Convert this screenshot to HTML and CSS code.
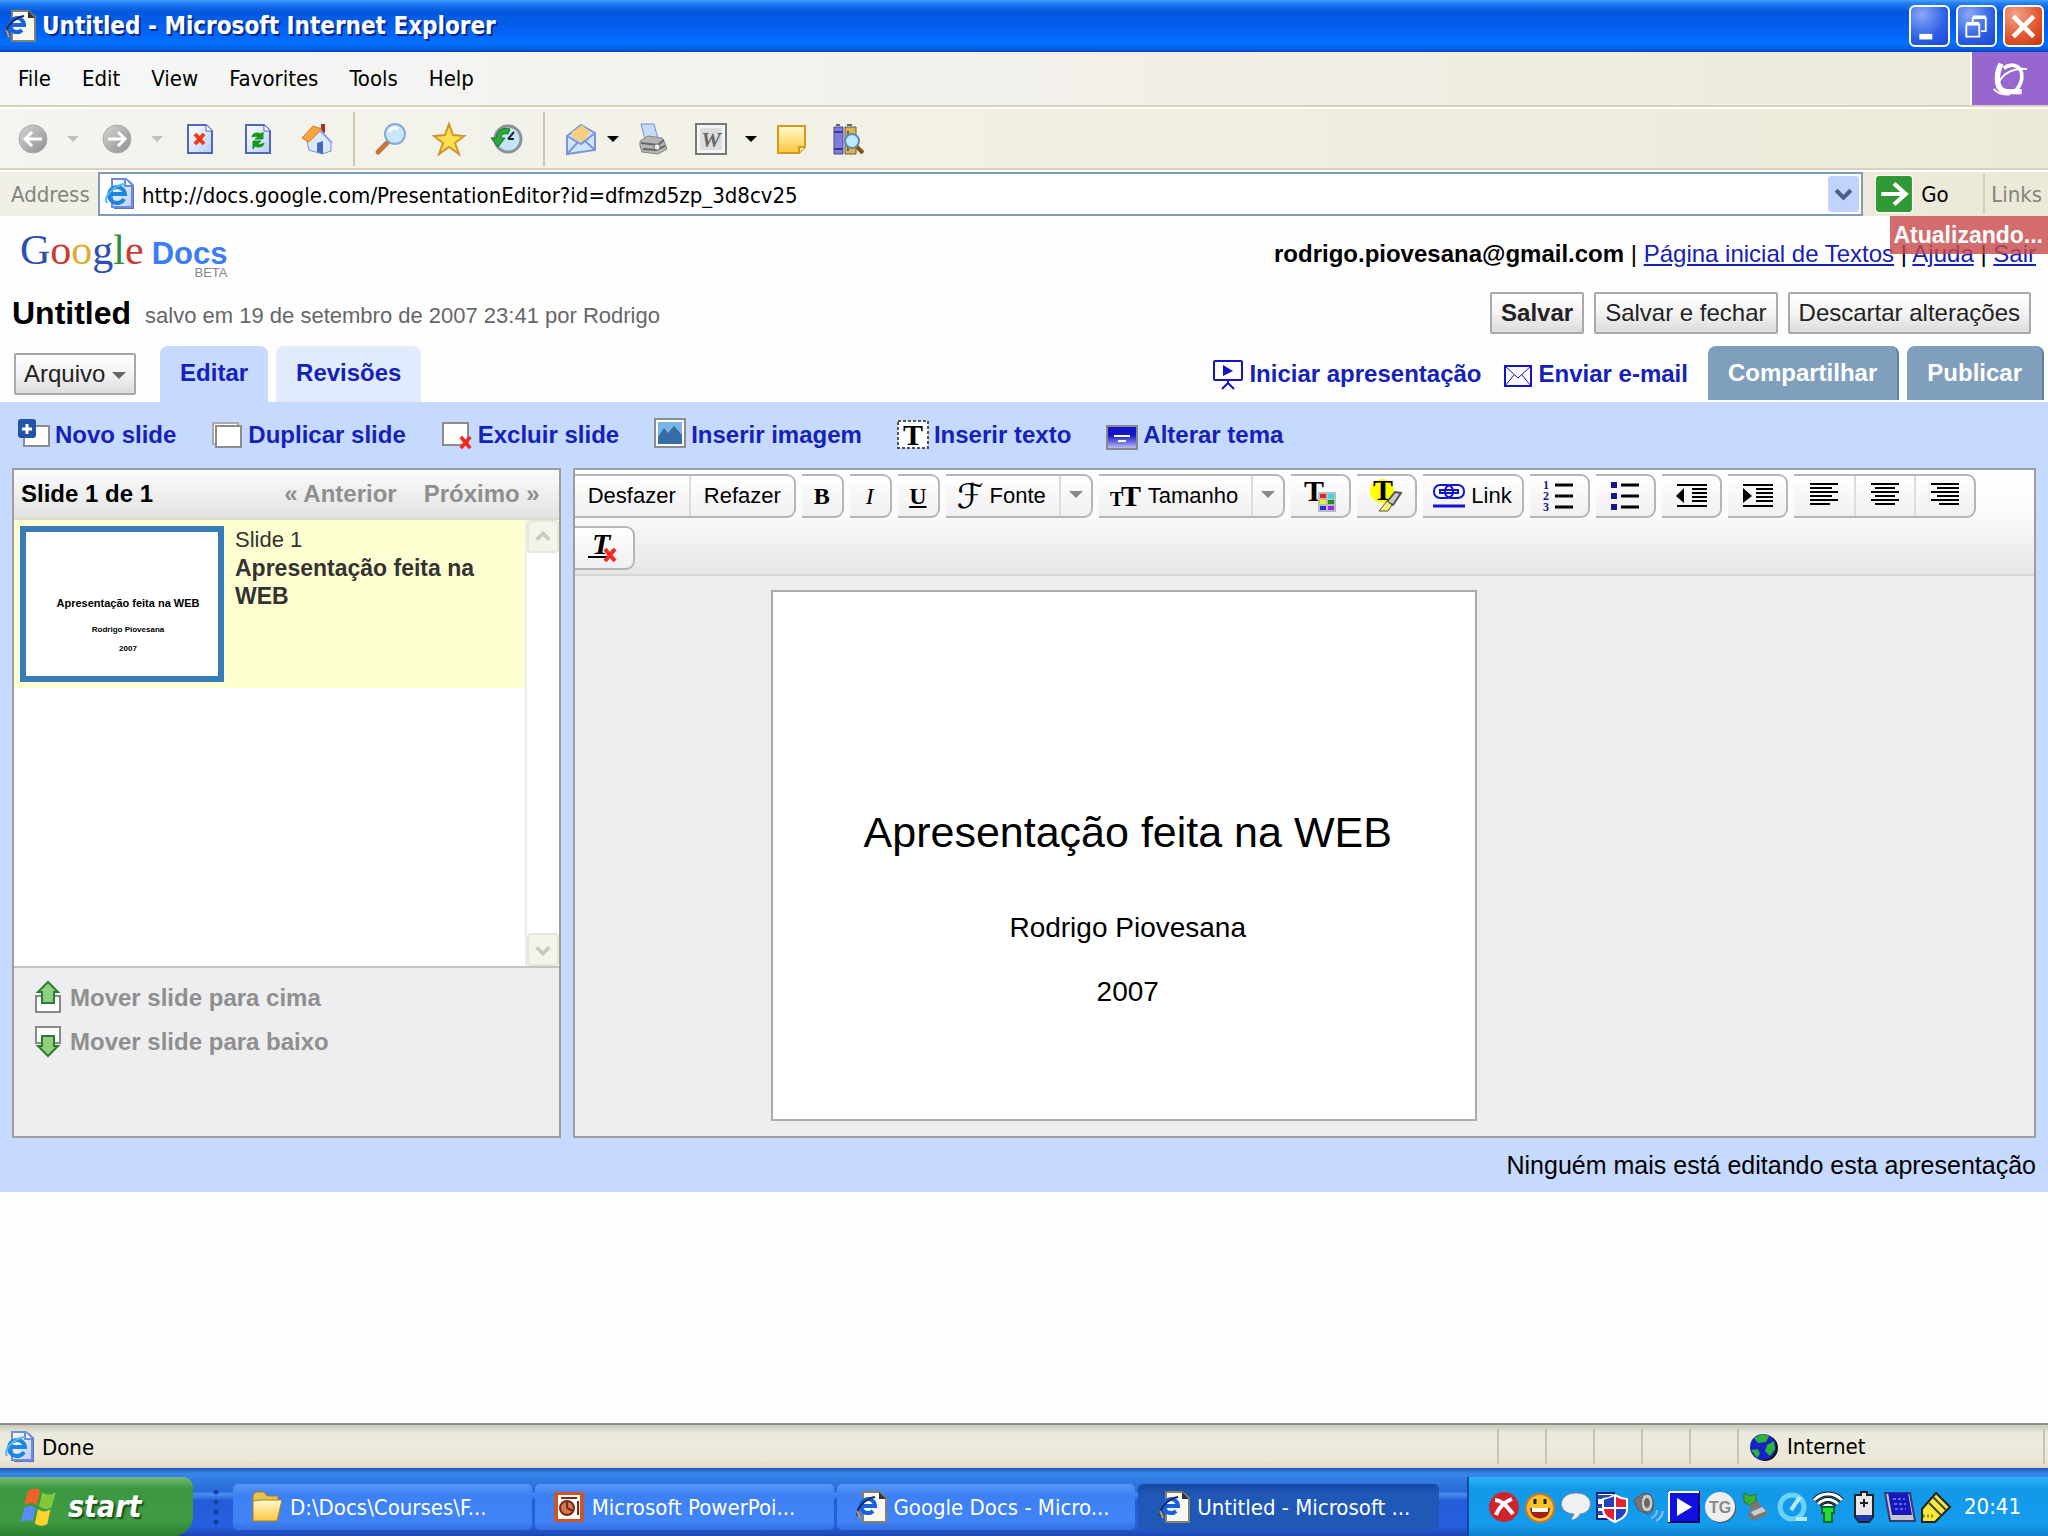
FILE: index.html
```html
<!DOCTYPE html>
<html lang="pt-BR">
<head>
    <meta charset="UTF-8">
    <meta name="viewport" content="width=device-width, initial-scale=1.0">
    <title>Untitled</title>
    <link rel="stylesheet" href="styles.css">
</head>
<body>
    <!-- Shared icons -->
    <svg class="defs" width="0" height="0" aria-hidden="true">
        <defs>
            <linearGradient id="page-fill" x1="0" y1="0" x2="1" y2="1">
                <stop offset="0" stop-color="#ffffff"/>
                <stop offset="1" stop-color="#b9cdf8"/>
            </linearGradient>
            <linearGradient id="gold" x1="0" y1="0" x2="0" y2="1">
                <stop offset="0" stop-color="#fffbd0"/>
                <stop offset="1" stop-color="#fcc63c"/>
            </linearGradient>
            <linearGradient id="grey" x1="0" y1="0" x2="1" y2="1">
                <stop offset="0" stop-color="#d4d4d4"/>
                <stop offset="1" stop-color="#8f8f8f"/>
            </linearGradient>
            <linearGradient id="navy" x1="0" y1="0" x2="0" y2="1">
                <stop offset="0.4" stop-color="#1414c8"/>
                <stop offset="1" stop-color="#c8ccf4"/>
            </linearGradient>
        </defs>
        <symbol id="ie-blue" viewBox="0 0 32 32">
            <path d="M10 2h15l5 5v24H10z" fill="#5f74b4"/>
            <path d="M8 1h14l6 6v22H8z" fill="url(#page-fill)" stroke="#6c8ce0" stroke-width="2"/>
            <path d="M21 1v7h7" fill="#fff" stroke="#6c8ce0" stroke-width="2"/>
            <path d="M20 21a8 8 0 1 1 1-5H7" fill="none" stroke="#1d86dc" stroke-width="4"/>
            <path d="M3 25C-1 19 10 7 21 6" fill="none" stroke="#59b9f0" stroke-width="2"/>
        </symbol>
        <symbol id="ie-white" viewBox="0 0 32 32">
            <path d="M8 1h16l7 6v24H8z" fill="#f7f7f2" stroke="#85806c" stroke-width="2"/>
            <path d="M24 1v7h7z" fill="#333"/>
            <path d="M18 20a7 7 0 1 1 2-5H7" fill="none" stroke="#1762dc" stroke-width="4"/>
            <path d="M3 25C0 20 8 8 20 6" fill="none" stroke="#112a66" stroke-width="2"/>
            <path d="M2 20l3 7" stroke="#c19854" stroke-width="2"/>
        </symbol>
        <symbol id="red-x" viewBox="0 0 16 16">
            <path d="M3 2l10 12M13 2L3 14" stroke="#f52a1f" stroke-width="4"/>
        </symbol>
    </svg>

    <header class="titlebar">
        <svg class="icon"><use href="#ie-white"/></svg>
        <h1 class="window-title">Untitled - Microsoft Internet Explorer</h1>
        <button class="win-btn" aria-label="Minimize">
            <svg viewBox="0 0 40 40"><path d="M9 31h14" stroke="#fff" stroke-width="6"/></svg>
        </button>
        <button class="win-btn" aria-label="Restore">
            <svg viewBox="0 0 40 40" fill="none" stroke="#fff" stroke-width="2"><path d="M9 18h14v13H9zM9 16h14M16 16v-5h14v14h-5M16 9h14"/></svg>
        </button>
        <button class="win-btn close" aria-label="Close">
            <svg viewBox="0 0 40 40"><path d="M9 9l22 22M31 9L9 31" stroke="#fff" stroke-width="5"/></svg>
        </button>
    </header>

    <div class="menubar">
        <nav class="menus">
            <button>File</button>
            <button>Edit</button>
            <button>View</button>
            <button>Favorites</button>
            <button>Tools</button>
            <button>Help</button>
        </nav>
        <div class="throbber">
            <svg viewBox="0 0 40 40" fill="none" stroke="#fff">
                <path d="M10 3C3 18 5 34 17 34h16" stroke-width="6"/>
                <path d="M13 8c8-6 18-4 20 6 1 8-2 14-7 19" stroke-width="4"/>
                <path d="M8 23C13 13 25 7 39 9M2 31c4 5 10 7 18 6" stroke-width="2"/>
            </svg>
        </div>
    </div>

    <div class="ie-toolbar">
        <button class="tool" aria-label="Back"><svg class="icon" viewBox="0 0 32 32"><circle cx="16" cy="16" r="14" fill="url(#grey)" stroke="#aaa"/><path d="M25 16H8M15 9l-7 7 7 7" fill="none" stroke="#fff" stroke-width="3"/></svg></button>
        <button class="caret off" aria-label="Back history"></button>
        <button class="tool" aria-label="Forward"><svg class="icon" viewBox="0 0 32 32"><circle cx="16" cy="16" r="14" fill="url(#grey)" stroke="#aaa"/><path d="M7 16h17M17 9l7 7-7 7" fill="none" stroke="#fff" stroke-width="3"/></svg></button>
        <button class="caret off" aria-label="Forward history"></button>
        <button class="tool" aria-label="Stop"><svg class="icon" viewBox="0 0 32 32"><path d="M3 2h18l6 6v22H3z" fill="url(#page-fill)" stroke="#4d68b8" stroke-width="2"/><path d="M21 2v6h6" fill="#fff" stroke="#4d68b8"/><path d="M10 11l9 10M19 11l-9 10" stroke="#f03c14" stroke-width="4"/></svg></button>
        <button class="tool" aria-label="Refresh"><svg class="icon" viewBox="0 0 32 32"><path d="M3 2h18l6 6v22H3z" fill="url(#page-fill)" stroke="#4d68b8" stroke-width="2"/><path d="M21 2v6h6" fill="#fff" stroke="#4d68b8"/><path d="M9 14c0-4 6-5 9-3l2-2v7h-8l3-2c-2-1-4-1-6 0zM21 20c0 4-6 5-9 3l-2 3v-8h8l-3 3c2 1 4 0 6-1z" fill="#109a18" stroke="#109a18"/></svg></button>
        <button class="tool" aria-label="Home"><svg class="icon" viewBox="0 0 32 32"><path d="M6 18l13-11 11 12v9l-9 3-13-4z" fill="#dbe9fb" stroke="#7593c4"/><path d="M20 1h4v9h-4z" fill="#b4281e"/><path d="M1 15L12 3l9 3L8 19z" fill="#f6a344" stroke="#d07a24"/><path d="M19 7l12 13" stroke="#8ba6d4" stroke-width="2"/><path d="M16 20l6-2v13l-6-2z" fill="#426bc0"/></svg></button>
        <span class="tool-sep"></span>
        <button class="tool" aria-label="Search"><svg class="icon" viewBox="0 0 32 32"><path d="M14 18L3 29" stroke="#c6753a" stroke-width="5" stroke-linecap="round"/><circle cx="20" cy="11" r="10" fill="#cbe7fc" stroke="#85a9e0" stroke-width="2"/><path d="M14 9c1-4 6-5 9-3" stroke="#fff" stroke-width="3" fill="none"/></svg></button>
        <button class="tool" aria-label="Favorites"><svg class="icon" viewBox="0 0 32 32"><path d="M16 1l4 11 11 1-9 7 4 11-10-7-10 7 4-11-9-7 11-1z" fill="#ffe04c" stroke="#cf952a" stroke-width="2"/></svg></button>
        <button class="tool" aria-label="History"><svg class="icon" viewBox="0 0 32 32"><circle cx="17" cy="16" r="13" fill="#c3e6f5" stroke="#8b9199" stroke-width="3"/><path d="M17 16l6-7M17 16h6" stroke="#223" stroke-width="2"/><path d="M0 15h5C6 7 12 4 19 6l-2 5c-5-1-7 1-7 4h4l-7 9z" fill="#30a53c" stroke="#157a20"/></svg></button>
        <span class="tool-sep"></span>
        <button class="tool" aria-label="Mail"><svg class="icon" viewBox="0 0 32 32"><path d="M2 13L16 2l14 8v17L2 31z" fill="#d0e4fc" stroke="#7a96d6" stroke-width="2"/><path d="M7 9l10-7 9 8-8 9-11-4z" fill="#f8cf82"/><path d="M2 13l14 8 14-11M2 31l11-12M30 27l-10-9" fill="none" stroke="#7a96d6" stroke-width="2"/></svg></button>
        <button class="caret tight" aria-label="Mail options"></button>
        <button class="tool" aria-label="Print"><svg class="icon" viewBox="0 0 32 32"><path d="M4 1h13l4 15H8z" fill="#c6dcfb" stroke="#6a92e0"/><path d="M3 18l8-5 14 2 3 5 2 6-9 5-16-2-2-6z" fill="#b5b5b5" stroke="#858585"/><path d="M4 20l17 2 6-5M6 26l13 1 9-4" stroke="#666" fill="none" stroke-width="2"/><circle cx="20" cy="24" r="3" fill="#eee" stroke="#777"/></svg></button>
        <button class="tool" aria-label="Edit with Word"><svg class="icon" viewBox="0 0 32 32"><path d="M1 1h30v30H1z" fill="#f4f4f4" stroke="#777" stroke-width="2"/><path d="M5 5h22v22H5z" fill="#ddd"/><text x="16" y="24" text-anchor="middle" class="glyph word">W</text></svg></button>
        <button class="caret" aria-label="Edit options"></button>
        <button class="tool" aria-label="Discuss"><svg class="icon" viewBox="0 0 32 32"><path d="M3 3h27v21l-6 6H3z" fill="url(#gold)" stroke="#d39a1e" stroke-width="2"/><path d="M30 24h-6v6" fill="#fff3b0" stroke="#d39a1e" stroke-width="2"/></svg></button>
        <button class="tool" aria-label="Research"><svg class="icon" viewBox="0 0 32 32"><path d="M1 4h9v27H1z" fill="#7f7cdc" stroke="#4a489c"/><path d="M1 9h9M1 26h9" stroke="#3b3988" stroke-width="2"/><path d="M12 4h11v27H12z" fill="#dfb341" stroke="#55606e"/><path d="M3 2h4M14 2h5M15 8v20" stroke="#666" stroke-width="2"/><circle cx="19" cy="18" r="7" fill="#bdeafa" stroke="#5f86b5" stroke-width="2"/><path d="M24 24l6 6" stroke="#8a5416" stroke-width="4"/></svg></button>
    </div>

    <form class="addressbar">
        <label for="address">Address</label>
        <div class="address-box">
            <svg class="icon"><use href="#ie-blue"/></svg>
            <input id="address" type="text" value="http://docs.google.com/PresentationEditor?id=dfmzd5zp_3d8cv25">
            <button type="button" class="address-drop" aria-label="Show addresses"><svg viewBox="0 0 20 20"><path d="M3 6l7 7 7-7" fill="none" stroke="#4a6185" stroke-width="4"/></svg></button>
        </div>
        <button type="button" class="go-btn">
            <svg viewBox="0 0 36 36"><rect width="36" height="36" rx="3" fill="#fff"/><rect x="1" y="1" width="34" height="34" rx="3" fill="#2f9a35"/><path d="M6 18h22M18 8l11 10-11 10" fill="none" stroke="#fff" stroke-width="4"/></svg>
            Go
        </button>
        <button type="button" class="links-btn">Links</button>
    </form>

    <main class="page">
        <div class="updating">Atualizando...</div>

        <div class="account-row">
            <div class="logo">
                <span class="logo-google"><span class="b">G</span><span class="r">o</span><span class="y">o</span><span class="b">g</span><span class="g">l</span><span class="r">e</span></span>
                <span class="logo-docs">Docs<small>BETA</small></span>
            </div>
            <div class="account">
                <strong>rodrigo.piovesana@gmail.com</strong> | <a href="#">Página inicial de Textos</a> | <a href="#">Ajuda</a> | <a href="#">Sair</a>
            </div>
        </div>

        <div class="doc-row">
            <h2>Untitled</h2>
            <span class="saved">salvo em 19 de setembro de 2007 23:41 por Rodrigo</span>
            <div class="save-buttons">
                <button class="btn"><b>Salvar</b></button>
                <button class="btn">Salvar e fechar</button>
                <button class="btn">Descartar alterações</button>
            </div>
        </div>

        <div class="tab-row">
            <button class="btn file-btn">Arquivo <span class="down"></span></button>
            <a href="#" class="tab active">Editar</a>
            <a href="#" class="tab">Revisões</a>
            <div class="share">
                <a href="#" class="share-link"><svg class="icon" viewBox="0 0 32 32" fill="none" stroke="#1414c4" stroke-width="2"><rect x="2" y="3" width="28" height="19" rx="1"/><path d="M16 22v3l-6 6M16 25l6 6"/><path d="M11 7l10 6-10 5z" fill="#1414c4" stroke="none"/></svg>Iniciar apresentação</a>
                <a href="#" class="share-link"><svg class="icon" viewBox="0 0 32 32" fill="none" stroke="#1414c4" stroke-width="2"><rect x="3" y="8" width="26" height="20"/><path d="M3 8l13 12L29 8M3 28l9-11M29 28l-9-11" stroke-width="1"/></svg>Enviar e-mail</a>
                <a href="#" class="share-tab">Compartilhar</a>
                <a href="#" class="share-tab">Publicar</a>
            </div>
        </div>

        <div class="editor">
            <div class="actions">
                <a href="#"><svg class="icon" viewBox="0 0 32 32"><path d="M6 7h25v20H6z" fill="#fff" stroke="#8c8c8c" stroke-width="2"/><rect y="0" width="18" height="19" rx="3" fill="#2353a8"/><path d="M9 5v10M4 10h10" stroke="#fff" stroke-width="3"/></svg>Novo slide</a>
                <a href="#"><svg class="icon" viewBox="0 0 32 32"><path d="M2 4h25v21H2z" fill="#fff" stroke="#aaa" stroke-width="2"/><path d="M5 7h25v21H5z" fill="#fff" stroke="#8c8c8c" stroke-width="2"/></svg>Duplicar slide</a>
                <a href="#"><svg class="icon" viewBox="0 0 32 32"><path d="M2 4h25v22H2z" fill="#fff" stroke="#8c8c8c" stroke-width="2"/><use href="#red-x" x="17" y="15" width="15" height="17"/></svg>Excluir slide</a>
                <a href="#"><svg class="icon" viewBox="0 0 32 32"><path d="M1 0h30v28H1z" fill="#fff" stroke="#8c8c8c" stroke-width="2"/><path d="M4 3h24v22H4z" fill="#79b5e4"/><path d="M4 18l6-9 4 5 6-7 8 9v9H4z" fill="#376da4"/></svg>Inserir imagem</a>
                <a href="#"><svg class="icon" viewBox="0 0 32 32"><path d="M1 2h30v27H1z" fill="#fff" stroke="#555" stroke-width="2" stroke-dasharray="3 2"/><text x="16" y="26" text-anchor="middle" class="glyph big">T</text></svg>Inserir texto</a>
                <a href="#"><svg class="icon" viewBox="0 0 32 32"><path d="M1 7h30v23H1z" fill="url(#navy)" stroke="#888" stroke-width="2"/><path d="M8 17h16M12 22h8" stroke="#fff" stroke-width="2"/></svg>Alterar tema</a>
            </div>

            <div class="panels">
                <section class="slides-panel">
                    <div class="slides-head">
                        <strong>Slide 1 de 1</strong>
                        <button disabled>« Anterior</button>
                        <button disabled>Próximo »</button>
                    </div>
                    <div class="slides-list">
                        <div class="slides-scroll">
                            <div class="slide-item">
                                <div class="thumb">
                                    <p class="thumb-title">Apresentação feita na WEB</p>
                                    <p>Rodrigo Piovesana</p>
                                    <p>2007</p>
                                </div>
                                <div class="slide-label">Slide 1<b>Apresentação feita na WEB</b></div>
                            </div>
                        </div>
                        <div class="scrollbar">
                            <button disabled aria-label="Scroll up"><svg viewBox="0 0 20 20"><path d="M3 13l7-7 7 7" fill="none" stroke="#cac8bd" stroke-width="4"/></svg></button>
                            <button disabled aria-label="Scroll down"><svg viewBox="0 0 20 20"><path d="M3 7l7 7 7-7" fill="none" stroke="#cac8bd" stroke-width="4"/></svg></button>
                        </div>
                    </div>
                    <div class="slides-foot">
                        <button disabled><svg class="icon" viewBox="0 0 32 32"><path d="M4 14h24v16H4z" fill="#fff" stroke="#888" stroke-width="2"/><path d="M16 0l10 10h-4v11H10V10H6z" fill="#8fcf80" stroke="#2d7d32" stroke-width="2"/></svg>Mover slide para cima</button>
                        <button disabled><svg class="icon" viewBox="0 0 32 32"><path d="M4 1h24v16H4z" fill="#fff" stroke="#888" stroke-width="2"/><path d="M16 30L6 20h4V10h12v10h4z" fill="#8fcf80" stroke="#2d7d32" stroke-width="2"/></svg>Mover slide para baixo</button>
                    </div>
                </section>

                <section class="edit-panel">
                    <div class="format-bar">
                        <div class="group"><button>Desfazer</button><button>Refazer</button></div>
                        <div class="group small"><button class="serif"><b>B</b></button></div>
                        <div class="group small"><button class="serif"><i>I</i></button></div>
                        <div class="group small"><button class="serif"><b><u>U</u></b></button></div>
                        <div class="group"><button class="with-icon"><span class="script">ℱ</span>Fonte</button><button class="drop" aria-label="Fonte"><span class="down"></span></button></div>
                        <div class="group"><button class="with-icon"><svg class="icon" viewBox="0 0 32 32"><text x="0" y="26" class="glyph mid">T</text><text x="11" y="26" class="glyph big">T</text></svg>Tamanho</button><button class="drop" aria-label="Tamanho"><span class="down"></span></button></div>
                        <div class="group tile"><button aria-label="Cor do texto"><svg class="icon" viewBox="0 0 32 32"><text x="0" y="21" class="glyph big">T</text><path d="M14 12h18v20H14z" fill="#bbb"/><path d="M16 14h6v4h-6z" fill="#e62020"/><path d="M24 14h6v4h-6z" fill="#12e4f4"/><path d="M16 20h6v4h-6z" fill="#f5ee14"/><path d="M24 20h6v4h-6z" fill="#10902a"/><path d="M16 26h6v4h-6z" fill="#1c2ef4"/><path d="M24 26h6v4h-6z" fill="#9c28f4"/></svg></button></div>
                        <div class="group tile"><button aria-label="Cor de realce"><svg class="icon" viewBox="0 0 32 32"><circle cx="12" cy="11" r="12" fill="#ffff00"/><text x="3" y="20" class="glyph big">T</text><path d="M31 13l-8 12-6-3 8-10z" fill="#ccc" stroke="#555" stroke-width="2"/><path d="M17 21l5 4-4 6H9z" fill="#f8f070" stroke="#554"/></svg></button></div>
                        <div class="group"><button class="with-icon link"><svg class="icon" viewBox="0 0 32 32" fill="none" stroke="#1414cc" stroke-width="2"><rect x="1" y="5" width="19" height="13" rx="6"/><rect x="12" y="5" width="19" height="13" rx="6"/><path d="M7 10h18v3H7z"/><path d="M0 26h32" stroke-width="3"/></svg>Link</button></div>
                        <div class="group tile"><button aria-label="Lista numerada"><svg class="icon" viewBox="0 0 32 32"><text x="0" y="9" class="glyph num">1</text><text x="0" y="20" class="glyph num">2</text><text x="0" y="31" class="glyph num">3</text><path d="M12 5h18M12 16h18M12 27h18" stroke="#000" stroke-width="3"/></svg></button></div>
                        <div class="group tile"><button aria-label="Lista com marcadores"><svg class="icon" viewBox="0 0 32 32"><path d="M2 2h6v6H2zM2 13h6v6H2zM2 24h6v6H2z" fill="#15158c"/><path d="M12 5h18M12 16h18M12 27h18" stroke="#000" stroke-width="3"/></svg></button></div>
                        <div class="group tile"><button aria-label="Diminuir recuo"><svg class="icon" viewBox="0 0 32 32"><path d="M2 5h30M17 9h15M17 13h15M17 17h15M17 21h15M2 26h30" stroke="#000" stroke-width="2"/><path d="M9 8v15L1 16z"/></svg></button></div>
                        <div class="group tile"><button aria-label="Aumentar recuo"><svg class="icon" viewBox="0 0 32 32"><path d="M2 5h30M15 9h17M15 13h17M15 17h17M15 21h17M2 26h30" stroke="#000" stroke-width="2"/><path d="M2 8v15l9-7z"/></svg></button></div>
                        <div class="group tile align"><button aria-label="Alinhar à esquerda"><svg class="icon" viewBox="0 0 32 32"><path d="M2 4h28M2 8h22M2 12h28M2 16h22M2 20h28M2 24h20" stroke="#000" stroke-width="2"/></svg></button><button aria-label="Centralizar"><svg class="icon" viewBox="0 0 32 32"><path d="M2 4h28M6 8h20M2 12h28M6 16h20M2 20h28M6 24h20" stroke="#000" stroke-width="2"/></svg></button><button aria-label="Alinhar à direita"><svg class="icon" viewBox="0 0 32 32"><path d="M2 4h28M8 8h22M2 12h28M8 16h22M2 20h28M10 24h20" stroke="#000" stroke-width="2"/></svg></button></div>
                        <div class="group tile"><button aria-label="Remover formatação"><svg class="icon" viewBox="0 0 32 32"><text x="4" y="22" class="glyph big slant">T</text><path d="M0 25h20" stroke="#000" stroke-width="2"/><use href="#red-x" x="14" y="15" width="16" height="16"/></svg></button></div>
                    </div>
                    <div class="canvas">
                        <div class="slide">
                            <h3>Apresentação feita na WEB</h3>
                            <p>Rodrigo Piovesana</p>
                            <p>2007</p>
                        </div>
                    </div>
                </section>
            </div>

            <p class="presence">Ninguém mais está editando esta apresentação</p>
        </div>
    </main>

    <footer class="statusbar">
        <svg class="icon"><use href="#ie-blue"/></svg>
        <span class="status-text">Done</span>
        <span class="cell"></span><span class="cell"></span><span class="cell"></span><span class="cell"></span><span class="cell"></span>
        <span class="cell zone"><svg class="icon" viewBox="0 0 32 32"><circle cx="18" cy="17" r="13" fill="#111"/><circle cx="16" cy="16" r="13" fill="#1722c4"/><path d="M7 7l8-4 7 2-3 6-8 1zM20 14l7-4 1 8-5 7-5-5zM4 19l7-1 2 5-3 4z" fill="#2cb43a"/></svg>Internet</span>
    </footer>

    <div class="taskbar">
        <button class="start">
            <svg viewBox="0 0 36 40"><path d="M7 6c4-5 9-4 12-2l-3 14c-4-3-8-2-12 0z" fill="#f0622a"/><path d="M21 6c4 3 8 3 13 0l-4 14c-4 3-8 2-12-1z" fill="#7fc93a"/><path d="M4 21c4-3 8-2 11 0l-3 13c-4-2-8-2-12 1z" fill="#5b8af4"/><path d="M17 22c4 3 8 3 12 0l-3 14c-4 3-8 2-12 0z" fill="#fbd22e"/></svg>
            start
        </button>
        <span class="grip"></span>
        <div class="tasks">
            <button class="task"><svg class="icon" viewBox="0 0 32 32"><path d="M2 4l3-3h8l3 4h11v6H2z" fill="#e8c34e" stroke="#a87f1c"/><path d="M2 10v20h24l5-21H9z" fill="url(#gold)" stroke="#a87f1c"/></svg>D:\Docs\Courses\F...</button>
            <button class="task"><svg class="icon" viewBox="0 0 32 32"><path d="M1 1h30v30H1z" fill="#cc5425"/><path d="M5 4h22v24H5z" fill="#fff"/><circle cx="14" cy="17" r="7" fill="#d8754b" stroke="#762b12" stroke-width="2"/><path d="M14 17v-7M14 17l6 3M8 7h16M25 10v14" stroke="#762b12" stroke-width="2"/></svg>Microsoft PowerPoi...</button>
            <button class="task"><svg class="icon"><use href="#ie-white"/></svg>Google Docs - Micro...</button>
            <button class="task current"><svg class="icon"><use href="#ie-white"/></svg>Untitled - Microsoft ...</button>
        </div>
        <div class="tray">
            <svg class="icon" viewBox="0 0 32 32"><circle cx="16" cy="16" r="15" fill="#cf2430"/><path d="M7 9c7 0 13 7 18 14M8 24c3-8 8-13 16-16" fill="none" stroke="#fff" stroke-width="4"/></svg>
            <svg class="icon" viewBox="0 0 32 32"><circle cx="16" cy="17" r="14" fill="#fcc42c" stroke="#d8771c" stroke-width="2"/><path d="M11 8v5M21 8v5" stroke="#222" stroke-width="3"/><path d="M6 17h20c0 14-20 14-20 0z" fill="#a3201a"/><path d="M8 17h16v4H8z" fill="#fff"/></svg>
            <svg class="icon" viewBox="0 0 32 32"><path d="M16 2c19 0 18 20 4 21-2 4-6 6-9 6l3-6C-4 22-2 2 16 2z" fill="#f0f0f0" stroke="#8b8b8b"/></svg>
            <svg class="icon" viewBox="0 0 32 32"><path d="M1 2h17v26H1z" fill="#fff" stroke="#12207a" stroke-width="2"/><path d="M1 6h16M1 15h16M1 22h16" stroke="#1b46b8" stroke-width="4"/><path d="M7 8l6-1 6-3 6 3 6 1v11c0 6-6 9-12 12C13 28 7 25 7 19z" fill="#e42230" stroke="#fff" stroke-width="2"/><path d="M8 9l11-4v12H8zM19 17h11c0 7-5 10-11 13z" fill="#2440c4"/><path d="M19 5v25M8 17h22" stroke="#fff" stroke-width="2"/></svg>
            <svg class="icon" viewBox="0 0 32 32"><path d="M2 9l8-6c12-5 16 16 6 20L6 19z" fill="#777" stroke="#555"/><ellipse cx="15" cy="12" rx="6" ry="9" fill="#ccc" stroke="#555"/><ellipse cx="15" cy="12" rx="3" ry="5" fill="#666"/><path d="M19 27c3 0 6-4 6-8M24 30c4-2 6-5 7-10" stroke="#98b8ff" stroke-width="2" fill="none"/></svg>
            <svg class="icon" viewBox="0 0 32 32"><path d="M1 1h30v30H1z" fill="#1010e0" stroke="#050560" stroke-width="2"/><path d="M1 1h30M1 1v30" stroke="#fff" stroke-width="2"/><path d="M9 7l15 9-15 9z" fill="#fff"/></svg>
            <svg class="icon" viewBox="0 0 32 32"><circle cx="17" cy="17" r="15" fill="#555"/><circle cx="16" cy="16" r="15" fill="#eee"/><text x="16" y="22" text-anchor="middle" class="glyph tg">TG</text></svg>
            <svg class="icon" viewBox="0 0 32 32"><path d="M4 2l6 3 6-2v7l-6 4-6-3z" fill="#3fae35" stroke="#1c7a1c"/><path d="M9 14l9-4 4 6 5 4v4l-14 6-6-6 4-3z" fill="#777"/><path d="M11 21l11-5 4 4-12 5z" fill="#ccc"/></svg>
            <svg class="icon" viewBox="0 0 32 32" fill="none" stroke="#6cd2f8"><circle cx="16" cy="16" r="12" stroke-width="5"/><path d="M15 19l9-13M20 28h11" stroke="#b4ecff" stroke-width="4"/></svg>
            <svg class="icon" viewBox="0 0 32 32"><path d="M2 9c8-8 20-8 28 0M6 13c6-6 14-6 20 0M10 17c4-4 8-4 12 0" fill="none" stroke="#111" stroke-width="5"/><path d="M2 9c8-8 20-8 28 0M6 13c6-6 14-6 20 0M10 17c4-4 8-4 12 0" fill="none" stroke="#fff" stroke-width="3"/><path d="M10 16h12v6h-2v9h-8v-9h-2z" fill="#1ce02c" stroke="#063" stroke-width="2"/></svg>
            <svg class="icon" viewBox="0 0 32 32"><path d="M13 1h6v3h6v22l-4 5H11l-4-5V4h6z" fill="#e8e8e8" stroke="#222" stroke-width="2"/><path d="M8 24h16v3l-3 3H11l-3-3z" fill="#2638a8"/><path d="M16 8v8M12 12h8" stroke="#222" stroke-width="2"/></svg>
            <svg class="icon" viewBox="0 0 32 32"><path d="M1 2h25l5 28H6z" fill="#c4c4d4" stroke="#333a78" stroke-width="2"/><path d="M4 2h20l4 22H8z" fill="#1518bc"/><path d="M9 8h12M10 13h12M11 18h11" stroke="#5f68e6" stroke-width="2" stroke-dasharray="3 2"/></svg>
            <svg class="icon" viewBox="0 0 32 32"><path d="M2 18L16 2l14 14-15 15H2z" fill="#f8e83a" stroke="#222" stroke-width="2"/><path d="M9 12l12 12M13 6l13 13" stroke="#444" stroke-width="2"/><path d="M3 25h12" stroke="#998a10" stroke-width="3" stroke-dasharray="2 2"/></svg>
            <time>20:41</time>
        </div>
    </div>
</body>
</html>
```

FILE: styles.css
```css
* {
    margin: 0;
    padding: 0;
    box-sizing: border-box;
}

body {
    font-family: "Liberation Sans", Arial, sans-serif;
    font-size: 24px;
    color: #000;
    background: #fefefe;
    min-height: 100vh;
    display: flex;
    flex-direction: column;
    white-space: nowrap;
}

button {
    font: inherit;
    color: inherit;
    background: none;
    border: none;
}

a {
    color: #1522b8;
}

svg {
    display: block;
    overflow: visible;
}

.defs {
    position: absolute;
}

.icon {
    width: 32px;
    height: 32px;
    flex: none;
}

.glyph {
    font-family: "Liberation Serif", serif;
    font-weight: bold;
}

.glyph.big {
    font-size: 30px;
}

.glyph.mid {
    font-size: 20px;
}

.glyph.slant {
    font-style: italic;
}

.glyph.num {
    font-size: 12px;
    fill: #15158c;
}

.glyph.word {
    font-size: 22px;
    font-style: italic;
    fill: #666;
}

.glyph.tg {
    font-family: "Liberation Sans", sans-serif;
    font-size: 16px;
    fill: #888;
}

/* Browser window */
.titlebar,
.menubar,
.addressbar,
.statusbar,
.taskbar {
    font-family: "DejaVu Sans Condensed", "DejaVu Sans", sans-serif;
    font-size: 22px;
}

.titlebar {
    height: 52px;
    display: flex;
    align-items: center;
    gap: 6px;
    padding: 0 4px;
    background: linear-gradient(#4a9ffb 0, #2380f4 6%, #0558dd 22%, #0462f4 60%, #0470ff 82%, #0560e8 94%, #0743c0 100%);
}

.window-title {
    flex: 1;
    font-size: 24px;
    font-weight: bold;
    color: #fff;
    text-shadow: 2px 2px #0a2a8c;
}

.win-btn {
    width: 41px;
    height: 42px;
    border: 2px solid #fff;
    border-radius: 6px;
    background: radial-gradient(circle at 30% 20%, #8aa8f8, #2c5ee6 60%, #1c48cc);
}

.win-btn.close {
    background: radial-gradient(circle at 30% 20%, #f4a58a, #e0532c 60%, #c03a10);
}

.menubar {
    height: 55px;
    display: flex;
    justify-content: space-between;
    background: linear-gradient(90deg, #f6f7f8, #f2f0ea 50%, #ede9d9);
    border-bottom: 2px solid #d8d2bd;
}

.menus {
    display: flex;
    align-items: center;
    padding-left: 8px;
}

.menus button {
    padding: 0 10px;
    margin-right: 11px;
}

.throbber {
    width: 78px;
    background: #9767cf;
    border-left: 2px solid #fff;
    display: flex;
    align-items: center;
    justify-content: center;
}

.throbber svg {
    width: 36px;
    height: 36px;
}

.ie-toolbar {
    height: 63px;
    display: flex;
    align-items: center;
    padding-left: 4px;
    background: linear-gradient(90deg, #f4f4f0, #f2f0e4 50%, #ece9d8);
    border-top: 2px solid #fff;
    border-bottom: 2px solid #d8d2bd;
}

.tool {
    width: 58px;
    display: flex;
    justify-content: center;
}

.caret {
    width: 22px;
    display: flex;
    justify-content: center;
}

.caret::before,
.down {
    content: "";
    display: inline-block;
    border: 6px solid transparent;
    border-top-color: #000;
    border-bottom: none;
}

.caret.off {
    margin-right: 4px;
}

.caret.off::before {
    border-top-color: #c0c0bc;
}

.caret.tight {
    margin-left: -8px;
}

.tool-sep {
    width: 2px;
    height: 54px;
    margin: 0 7px;
    background: #cdc8b2;
}

.addressbar {
    height: 46px;
    display: flex;
    align-items: center;
    background: linear-gradient(90deg, #f0f0e8, #ece9d8);
    border-top: 2px solid #fff;
}

.addressbar label {
    width: 98px;
    padding-left: 11px;
    color: #85857e;
}

.address-box {
    flex: 1;
    height: 44px;
    display: flex;
    align-items: center;
    gap: 6px;
    padding: 0 2px 0 4px;
    background: #fff;
    border: 2px solid #7f9db9;
}

.address-box input {
    flex: 1;
    min-width: 0;
    padding-top: 3px;
    font: inherit;
    border: none;
    outline: none;
}

.address-drop {
    width: 31px;
    height: 36px;
    padding: 5px;
    border-radius: 3px;
    background: #c2d3fb;
}

.go-btn {
    width: 110px;
    height: 40px;
    margin-left: 12px;
    display: flex;
    align-items: center;
    gap: 8px;
    border-right: 2px solid #d2cdb8;
}

.go-btn svg {
    width: 38px;
    height: 38px;
}

.links-btn {
    padding: 0 6px;
    color: #85857e;
}

/* Docs page */
.page {
    flex: 1;
    position: relative;
}

.updating {
    position: absolute;
    top: 0;
    right: 0;
    padding: 0 5px 0 4px;
    font-size: 23px;
    line-height: 38px;
    font-weight: bold;
    color: #fff;
    background: rgba(200, 72, 72, 0.8);
}

.account-row {
    height: 76px;
    display: flex;
    justify-content: space-between;
    align-items: center;
    padding: 0 12px 0 20px;
}

.logo {
    display: flex;
    align-items: baseline;
    gap: 8px;
    padding-bottom: 8px;
}

.logo-google {
    font-family: "Liberation Serif", serif;
    font-size: 42px;
    line-height: 48px;
}

.logo .b { color: #2a50b4; }
.logo .r { color: #c83c32; }
.logo .y { color: #e0ae28; }
.logo .g { color: #2f8c3e; }

.logo-docs {
    position: relative;
    font-size: 31px;
    font-weight: bold;
    color: #3c7cf4;
}

.logo-docs small {
    position: absolute;
    right: 0;
    bottom: -8px;
    font-size: 13px;
    font-weight: normal;
    color: #888;
}

.doc-row {
    height: 42px;
    display: flex;
    align-items: center;
    gap: 14px;
    padding: 0 17px 0 12px;
}

.doc-row h2 {
    font-size: 32px;
}

.saved {
    font-size: 22px;
    padding-top: 6px;
    color: #66666a;
}

.save-buttons {
    display: flex;
    gap: 10px;
    margin-left: auto;
}

.btn {
    height: 42px;
    padding: 0 9px;
    color: #222;
    border: 2px solid #aaa8aa;
    border-radius: 2px;
    background: linear-gradient(#fff, #f4f3f4 50%, #dddbdd);
}

.tab-row {
    display: flex;
    align-items: flex-end;
    margin-top: 12px;
    height: 56px;
    padding: 0 4px 0 14px;
}

.file-btn {
    align-self: center;
    padding: 0 8px;
    margin-right: 24px;
}

.down {
    border-width: 7px;
    border-bottom: none;
    border-top-color: #666;
    margin-bottom: 3px;
}

.tab,
.share-tab {
    height: 56px;
    line-height: 54px;
    padding: 0 20px;
    margin-right: 8px;
    font-weight: bold;
    text-decoration: none;
    border-radius: 8px 8px 0 0;
    background: #e1ebfe;
}

.tab.active {
    background: #c6d9ff;
}

.share {
    display: flex;
    gap: 8px;
    margin-left: auto;
}

.share-link {
    display: flex;
    align-items: center;
    gap: 5px;
    margin-right: 12px;
    font-weight: bold;
    text-decoration: none;
}

.share-tab {
    height: 54px;
    margin: 0 0 2px;
    color: #fff;
    background: #7f9fbd;
    border-right: 2px solid #5683a0;
}

.editor {
    background: #c6d9ff;
    padding: 0 12px;
}

.actions {
    height: 66px;
    display: flex;
    align-items: center;
    gap: 35px;
    padding-left: 6px;
}

.actions a {
    display: flex;
    align-items: center;
    gap: 5px;
    font-weight: bold;
    text-decoration: none;
}

.panels {
    display: grid;
    grid-template-columns: minmax(0, 3fr) minmax(0, 8fr);
    gap: 12px;
}

.slides-panel,
.edit-panel {
    border: 2px solid #9d9d9f;
    background: #eeedef;
}

.slides-panel button {
    font-weight: bold;
    color: #8f8f8f;
}

.slides-head {
    height: 50px;
    display: flex;
    align-items: center;
    gap: 27px;
    padding: 0 19px 0 7px;
    background: linear-gradient(#fbfbfb, #e2e2e3);
    border-bottom: 2px solid #dcdcd0;
}

.slides-head strong {
    margin-right: auto;
}

.slides-list {
    height: 448px;
    display: flex;
    background: #fff;
    border-bottom: 2px solid #c4c4bf;
}

.slides-scroll {
    flex: 1;
}

.slide-item {
    display: flex;
    gap: 11px;
    padding: 6px;
    background: #feffd0;
    white-space: normal;
}

.thumb {
    width: 204px;
    height: 156px;
    padding: 60px 0 0 12px;
    flex: none;
    background: #fff;
    border: 6px solid #377db9;
    text-align: center;
    font-size: 8px;
    line-height: 19px;
    font-weight: bold;
    white-space: nowrap;
}

.thumb-title {
    font-size: 11px;
    line-height: 22px;
    margin-bottom: 6px;
}

.slide-label {
    font-size: 22px;
    line-height: 28px;
    color: #333;
}

.slide-label b {
    display: block;
    font-size: 23px;
}

.scrollbar {
    width: 34px;
    display: flex;
    flex-direction: column;
    justify-content: space-between;
    border-left: 2px solid #edece8;
}

.scrollbar button {
    height: 33px;
    padding: 5px;
    border: 2px solid #e8e7dd;
    border-radius: 4px;
    background: #f5f4ec;
}

.slides-foot {
    height: 168px;
    padding: 8px 18px;
}

.slides-foot button {
    height: 44px;
    display: flex;
    align-items: center;
    gap: 6px;
}

.format-bar {
    display: flex;
    flex-wrap: wrap;
    gap: 8px 6px;
    padding: 4px 0;
    background: linear-gradient(#fff, #fafafa 45%, #e6e5e7);
    border-bottom: 2px solid #d6d6d8;
}

.group {
    display: flex;
    height: 44px;
    border: 2px solid #b6b6b8;
    border-left: none;
    border-radius: 0 9px 9px 0;
    background: linear-gradient(#fff, #f0eff1);
    font-size: 22px;
}

.group button {
    display: flex;
    align-items: center;
    justify-content: center;
    padding: 0 13px;
}

.group button + button {
    border-left: 2px solid #dcdcde;
}

.group.small button {
    width: 40px;
    padding: 0;
}

.group.tile button {
    width: 58px;
    padding: 0;
}

.group.align button {
    width: 60px;
}

.group .with-icon {
    gap: 6px;
    padding-left: 11px;
}

.group .link {
    padding: 0 10px;
}

.group .drop {
    padding: 0 8px;
}

.group .down {
    border-top-color: #888;
}

.serif {
    font-family: "Liberation Serif", serif;
    font-size: 24px;
}

.script {
    font-family: "DejaVu Serif", "DejaVu Sans", serif;
    font-size: 34px;
    line-height: 40px;
}

.canvas {
    padding: 14px 0 15px 196px;
}

.slide {
    width: 706px;
    height: 531px;
    padding: 212px 0 0 8px;
    background: #fff;
    border: 2px solid #ababab;
    text-align: center;
    font-size: 28px;
}

.slide h3 {
    font-size: 43px;
    font-weight: normal;
    line-height: 56px;
    margin-bottom: 36px;
}

.slide p {
    line-height: 64px;
}

.presence {
    padding: 12px 0;
    font-size: 25px;
    line-height: 30px;
    text-align: right;
}

/* Status bar and taskbar */
.statusbar {
    height: 45px;
    display: flex;
    align-items: center;
    padding: 0 3px 0 4px;
    background: linear-gradient(#c8c7bc, #ebebdd 20%, #ebe8d8 80%, #e4d6c2);
    border-top: 2px solid #8c8c88;
}

.status-text {
    flex: 1;
    padding: 2px 0 0 6px;
}

.cell {
    width: 48px;
    height: 35px;
    border-left: 2px solid #c9c5b5;
}

.cell.zone {
    width: 308px;
    display: flex;
    align-items: center;
    gap: 8px;
    padding-left: 8px;
    border-right: 2px solid #c9c5b5;
}

.taskbar {
    height: 68px;
    display: flex;
    align-items: flex-end;
    background: linear-gradient(#1f50b4 0, #3585ea 8%, #2a6ad8 35%, #4a90f0 38%, #245cd8 48%, #2660e0 85%, #1c46b0);
    color: #fff;
}

.start {
    width: 193px;
    height: 59px;
    display: flex;
    align-items: center;
    gap: 10px;
    padding-left: 20px;
    font-size: 30px;
    font-weight: bold;
    font-style: italic;
    text-shadow: 2px 2px 2px #1c4a1c;
    border-radius: 0 10px 20px 0;
    background: linear-gradient(#76b876, #3c9840 20%, #3f9c42 75%, #2c7c30);
}

.start svg {
    width: 38px;
    height: 42px;
}

.grip {
    width: 10px;
    height: 40px;
    margin: 0 12px 9px 18px;
    background: radial-gradient(circle, #1440a4 2px, transparent 3px) 0 0 / 10px 10px;
}

.tasks {
    flex: 1;
    display: flex;
    gap: 3px;
    padding: 0 28px 6px 0;
}

.task {
    flex: 1;
    height: 46px;
    display: flex;
    align-items: center;
    gap: 7px;
    padding-left: 18px;
    border-radius: 5px;
    background: linear-gradient(#5a96f8, #3c80f4 25%, #4084f8 80%, #3470e0);
}

.task.current {
    padding-left: 20px;
    background: linear-gradient(#1848a0, #2058b8 25%, #2058b8);
}

.tray {
    height: 59px;
    display: flex;
    align-items: center;
    gap: 4px;
    padding: 0 27px 0 19px;
    border-left: 2px solid #0c4c9c;
    background: linear-gradient(#2cb4f4, #1498e8 20%, #149cec 80%, #1080d0);
}

.tray time {
    padding-left: 8px;
}
```
